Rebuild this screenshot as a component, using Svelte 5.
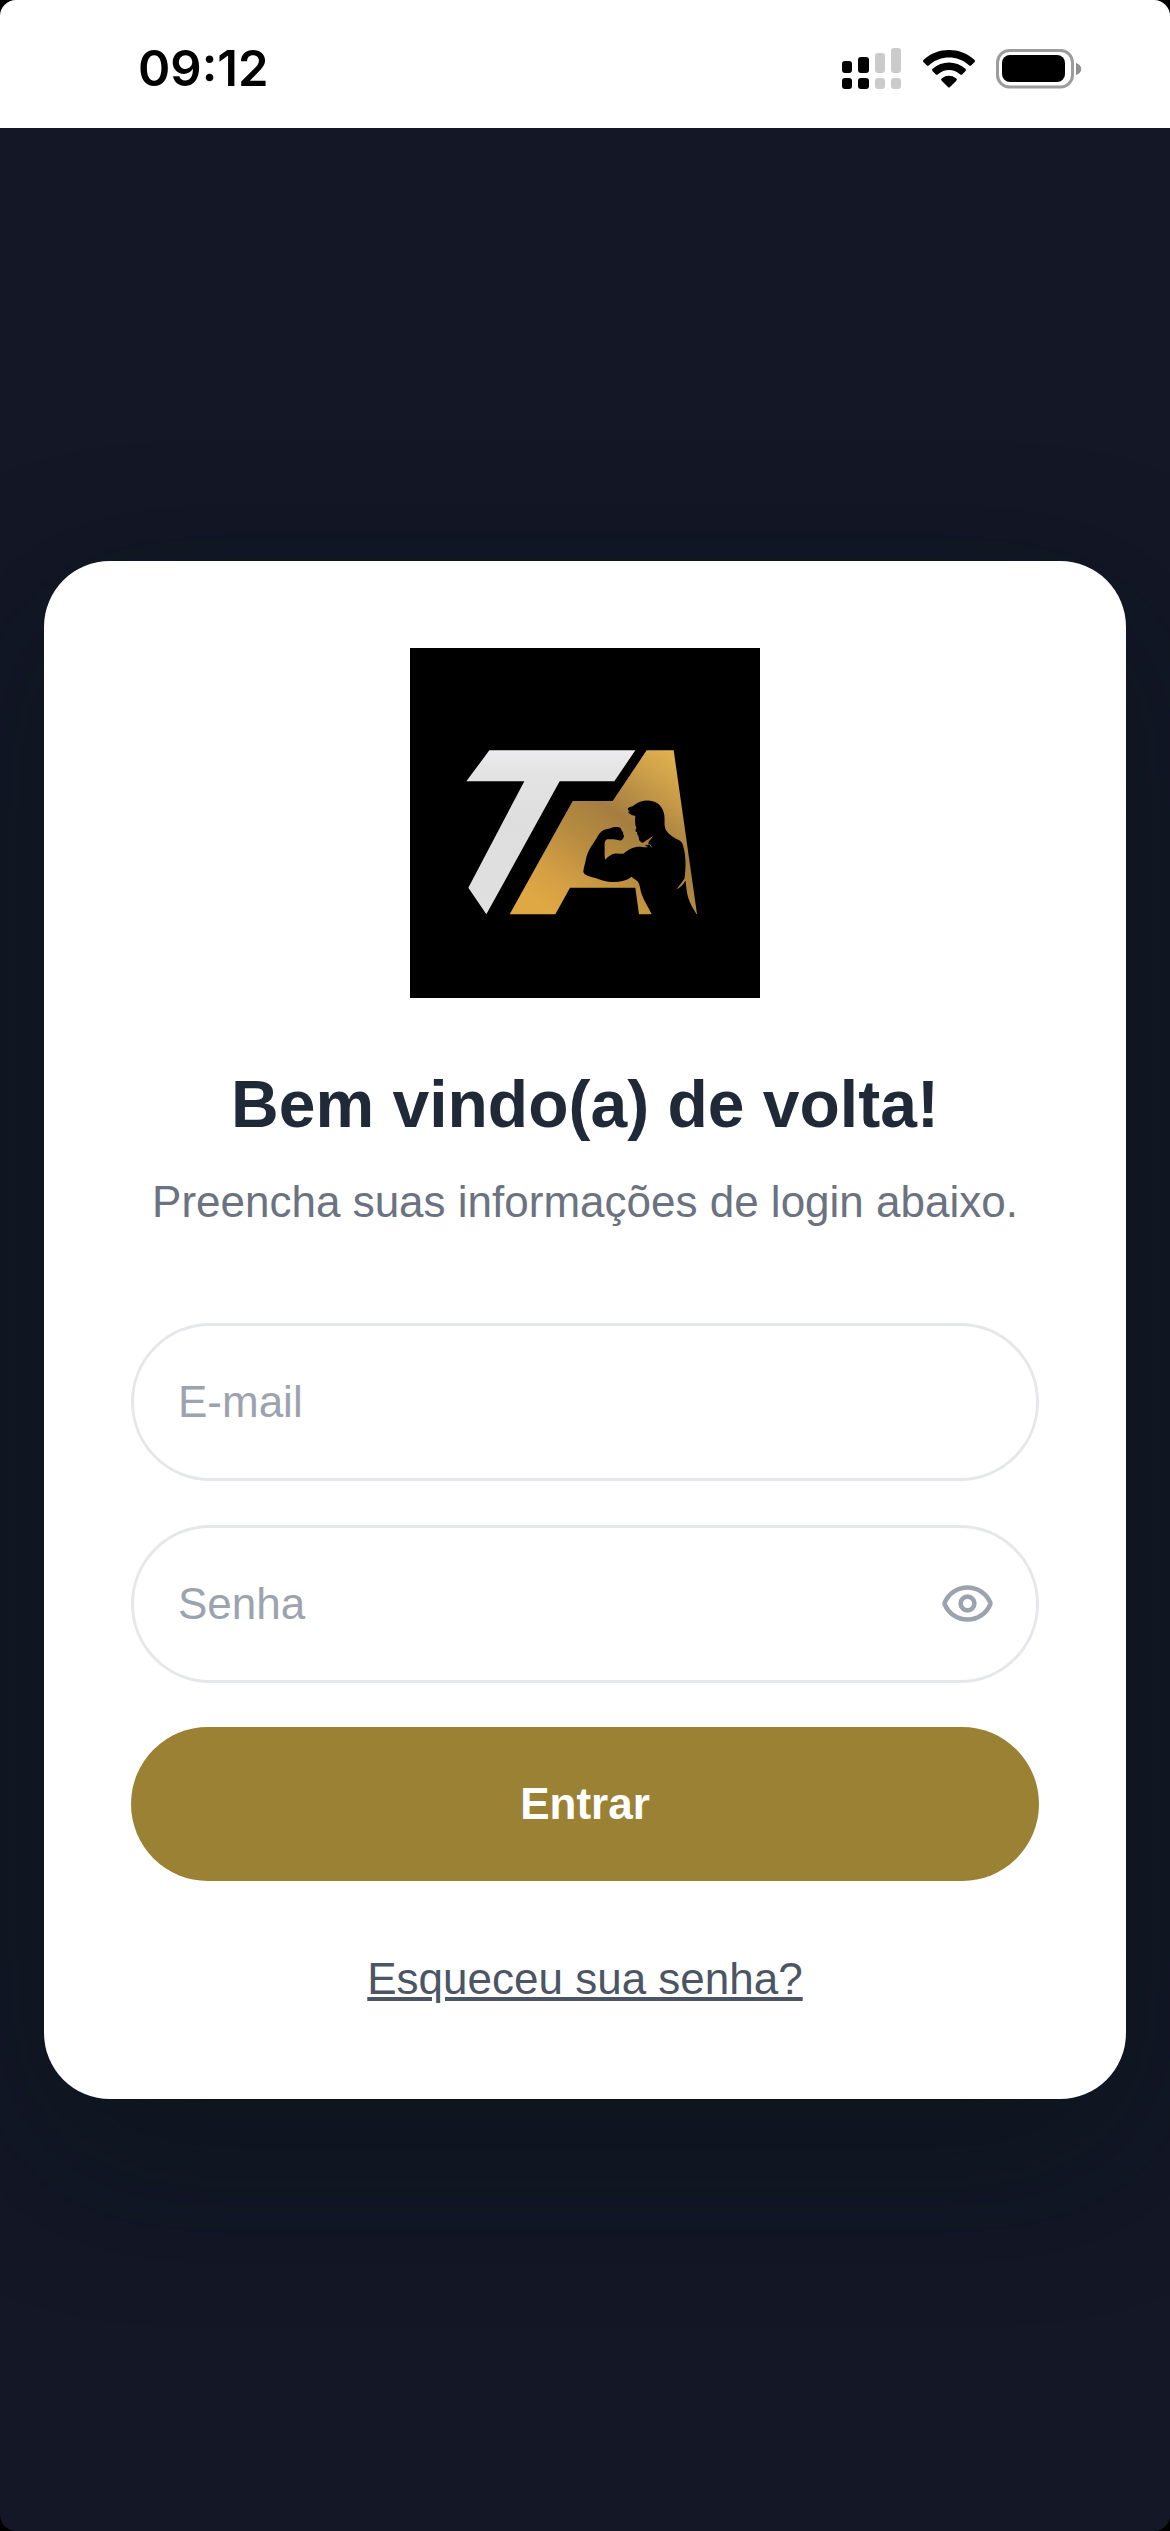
<script lang="ts">
	let email = $state('');
	let password = $state('');
	let showPassword = $state(false);

	function login(e: SubmitEvent) {
		e.preventDefault();
	}
</script>

<div class="screen">
	<!-- ── Status bar ── -->
	<header class="status-bar">
		<time class="clock">09:12</time>
		<div class="indicators">
			<svg width="60" height="42" viewBox="0 0 60 42" aria-hidden="true">
				<g fill="#000">
					<rect x="0" y="13" width="10" height="12" rx="3" />
					<rect x="0" y="30" width="10" height="11" rx="3" />
					<rect x="16" y="9" width="11" height="16" rx="3" />
					<rect x="16" y="30" width="11" height="11" rx="3" />
				</g>
				<g fill="#cbcbcb">
					<rect x="33" y="5" width="10" height="20" rx="3" />
					<rect x="33" y="30" width="10" height="11" rx="3" />
					<rect x="49" y="0" width="10" height="25" rx="3" />
					<rect x="49" y="30" width="10" height="11" rx="3" />
				</g>
			</svg>
			<svg width="52" height="40" viewBox="0 0 156 120" aria-hidden="true">
				<path d="M2 40Q-2 36 2 32C44 -7 112 -7 154 32Q158 36 154 40L145 49Q142 52 138 49C104 18 52 18 18 49Q14 52 11 49Z" />
				<path d="M29 67Q25 63 29 59C57 34 99 34 127 59Q131 63 127 67L118 76Q115 79 111 76C92 59 64 59 45 76Q41 79 38 76Z" />
				<path d="M56 95Q52 91 57 88C70 78 86 78 99 88Q104 91 100 95L81 114Q78 117 75 114Z" />
			</svg>
			<svg width="86" height="40" viewBox="0 0 86 40" aria-hidden="true">
				<rect x="1.5" y="1.5" width="75" height="36.5" rx="12" fill="none" stroke="#9c9c9c" stroke-width="3" />
				<rect x="6" y="6" width="63" height="27" rx="8" />
				<path d="M80 14C87 16 87 24 80 26Z" fill="#8f8f8f" />
			</svg>
		</div>
	</header>

	<main class="content">
		<section class="card">
			<svg class="logo" viewBox="-90 -216 1050 1050" role="img" aria-label="TA">
				<defs>
					<linearGradient id="silver" x1="0" y1="0" x2="0" y2="1">
						<stop offset="0" stop-color="#ececee" />
						<stop offset="0.12" stop-color="#e4e4e5" />
						<stop offset="0.45" stop-color="#dededf" />
						<stop offset="1" stop-color="#e0e0e0" />
					</linearGradient>
					<linearGradient id="gold" gradientUnits="userSpaceOnUse" x1="700" y1="80" x2="350" y2="590">
						<stop offset="0" stop-color="#e5b551" />
						<stop offset="0.2" stop-color="#c99c48" />
						<stop offset="0.42" stop-color="#a47e40" />
						<stop offset="0.62" stop-color="#b78b40" />
						<stop offset="0.85" stop-color="#d5a044" />
						<stop offset="1" stop-color="#dfa843" />
					</linearGradient>
				</defs>
				<rect x="-90" y="-216" width="1050" height="1050" fill="#000" />
				<path fill="url(#silver)" d="M148 91H586L523 184H359L139 583L85 503L253 184H79Z" />
				<path fill="url(#gold)" d="M398 243H518L620 91H701L771 582L597 583L586 503H390L346 583H209Z" />
				<!-- flexing silhouette -->
				<path
					d="M564 265C568 259 577 261 582 256C594 245 612 240 630 242C654 244 670 262 673 286
					C675 304 671 320 679 332C687 344 701 353 716 360C727 365 729 374 732 388C737 410 737 430 736 450
					C735 461 735 470 733 476C727 488 717 496 709 508C720 503 729 494 737 482C739 506 741 526 749 545
					C755 560 764 571 769 582L769 600H640L635 583C626 562 612 544 604 520C600 506 600 492 592 484
					C586 478 580 475 575 470C561 481 543 486 520 486C498 486 484 480 466 474C450 470 431 465 430 455
					C431 444 435 431 438 417C442 393 457 375 469 356C474 346 482 334 491 330C498 327 504 328 511 325
					C521 320 535 320 541 323C544 328 546 333 549 337C550 341 549 343 552 348C551 354 549 357 545 361
					C536 363 527 357 518 358C509 358 503 357 498 359C492 367 494 375 494 384C494 397 493 409 496 419
					C502 410 513 403 523 401C533 399 542 402 550 401C559 393 572 384 589 381C604 379 614 384 624 381
					L614 376L627 374C624 369 625 364 631 359L640 348C631 353 621 360 611 367C606 370 601 365 597 359
					C599 354 594 352 595 347C590 343 592 340 591 336C584 335 587 329 589 323C584 312 585 299 586 287
					C578 287 568 283 564 276L571 273C564 273 562 269 564 265Z"
				/>
				<path fill="none" stroke="#a9823f" stroke-width="3" d="M629 373L635 382" />
			</svg>

			<h1>Bem vindo(a) de volta!</h1>
			<p class="subtitle">Preencha suas informações de login abaixo.</p>

			<form onsubmit={login}>
				<input
					class="field"
					type="email"
					placeholder="E-mail"
					aria-label="E-mail"
					autocomplete="email"
					bind:value={email}
				/>
				<div class="password">
					<input
						class="field"
						type={showPassword ? 'text' : 'password'}
						placeholder="Senha"
						aria-label="Senha"
						autocomplete="current-password"
						bind:value={password}
					/>
					<button
						class="toggle"
						type="button"
						aria-label={showPassword ? 'Ocultar senha' : 'Mostrar senha'}
						onclick={() => (showPassword = !showPassword)}
					>
						<svg viewBox="0 0 24 24" aria-hidden="true">
							<path
								d="M2.062 12.348a1 1 0 0 1 0-.696 10.75 10.75 0 0 1 19.876 0 1 1 0 0 1 0 .696 10.75 10.75 0 0 1-19.876 0"
							/>
							<circle cx="12" cy="12" r="3" />
						</svg>
					</button>
				</div>
				<button class="submit" type="submit">Entrar</button>
			</form>

			<a class="forgot" href="#recuperar">Esqueceu sua senha?</a>
		</section>
	</main>
</div>

<style>
	:global(body) {
		margin: 0;
		background: #000;
	}

	.screen {
		min-height: 100vh;
		display: flex;
		flex-direction: column;
		border-radius: 16px;
		overflow: hidden;
		background: #131726;
		font-family: 'Liberation Sans', Arial, sans-serif;
		font-size: 44px;
		line-height: 66px;
	}

	/* ── Status bar ── */
	.status-bar {
		display: flex;
		align-items: center;
		justify-content: space-between;
		box-sizing: border-box;
		height: 128px;
		padding: 10px 88px 0 138px;
		background: #fff;
		color: #000;
	}
	.clock {
		font-family: Inter, sans-serif;
		font-size: 49px;
		font-weight: 600;
		line-height: 68px;
	}
	.indicators {
		display: flex;
		align-items: center;
		gap: 21px;
	}

	/* ── Card ── */
	.content {
		flex: 1;
		display: flex;
		align-items: center;
		justify-content: center;
		padding: 44px;
	}
	.card {
		flex: 1;
		display: flex;
		flex-direction: column;
		align-items: center;
		max-width: 1224px;
		padding: 87px;
		box-sizing: border-box;
		border-radius: 66px;
		background: #fff;
		box-shadow: 0 54px 160px rgba(2, 16, 14, 0.36);
		text-align: center;
	}
	.logo {
		display: block;
		width: 350px;
		height: 350px;
	}
	h1 {
		margin: 65px 0 24px;
		color: #1f2937;
		font-size: 66px;
		line-height: 82px;
	}
	.subtitle {
		margin: 0 0 88px;
		color: #6b7280;
	}

	/* ── Form ── */
	form {
		align-self: stretch;
		display: flex;
		flex-direction: column;
		gap: 44px;
	}
	.field {
		box-sizing: border-box;
		width: 100%;
		height: 158px;
		padding: 0 44px;
		border: 3px solid #e5e7eb;
		border-radius: 80px;
		background: #fff;
		color: #1f2937;
		font: inherit;
		outline: none;
	}
	.field::placeholder {
		color: #9ca3af;
		opacity: 1;
	}
	.field:focus {
		border-color: #9a8133;
	}
	.password {
		position: relative;
		display: flex;
	}
	.password .field {
		padding-right: 132px;
	}
	.toggle {
		position: absolute;
		top: 0;
		bottom: 0;
		right: 44px;
		display: flex;
		align-items: center;
		padding: 0;
		border: none;
		background: none;
		color: #9ca3af;
		cursor: pointer;
	}
	.toggle svg {
		width: 55px;
		height: 55px;
		fill: none;
		stroke: currentColor;
		stroke-width: 2;
		stroke-linecap: round;
		stroke-linejoin: round;
	}
	.submit {
		padding: 44px;
		border: none;
		border-radius: 80px;
		background: #9a8133;
		color: #fff;
		font: inherit;
		font-weight: 700;
		cursor: pointer;
	}
	.submit:hover {
		background: #87712c;
	}
	.forgot {
		margin-top: 65px;
		color: #4b5563;
		text-decoration: underline;
	}
</style>
